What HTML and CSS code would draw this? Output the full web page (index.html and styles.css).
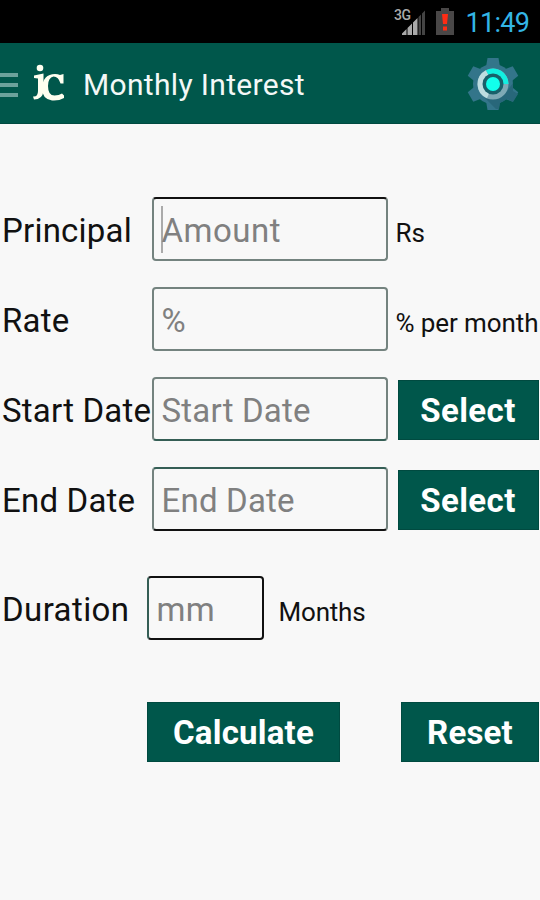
FILE: index.html
```
<!DOCTYPE html>
<html lang="en">
<head>
<meta charset="utf-8">
<title>Monthly Interest</title>
<link rel="stylesheet" href="styles.css">
</head>
<body>
<div class="status">
  <svg class="signal" width="32" height="30" viewBox="0 0 32 30">
    <path fill="#a9a9a9" d="M7 27V25.500L11.500 21V27zM12.500 27V20L17 15.500V27zM18 27V14.500L22.500 10V27z"/>
    <path fill="#444" d="M23.500 27V9L26 6.500V27zM27 27V5.500L30 2.500V27z"/>
  </svg>
  <span class="network">3G</span>
  <svg class="battery" width="18" height="27" viewBox="0 0 18 27">
    <path fill="#494747" d="M5 0h8v3h5v24H0V3h5z"/>
    <path fill="#ff2c14" d="M6 6h6l-1 10H7zM7 18.500h4v4H7z"/>
  </svg>
  <span class="clock">11:49</span>
</div>
<header class="bar">
  <svg class="menu" width="18" height="26" viewBox="0 0 18 26"><path fill="#6ba29b" d="M0 1h18v4H0zM0 11h18v4H0zM0 21h18v4H0z"/></svg>
  <svg class="logo" width="34" height="38" viewBox="0 0 34 38">
    <circle cx="8" cy="4" r="3.300" fill="#fffff0"/>
    <path fill="#fffff0" d="M2 11.500 11.500 9.500V27Q10.500 35.500 2 35.500L1 32.500Q6 33 6 27V14.500L2 14z"/>
    <path fill="#fffff0" d="M31.500 10V19.500H28.500Q26.500 12.500 21.500 12.500Q16 13.500 16 22Q16 31.500 22.500 31.500Q27 31.500 30 29.500L32 31.500V34Q27 37 20 36.500Q10 35 10 24Q11 10 23 10Q26 10 28 11z"/>
  </svg>
  <h1 class="title">Monthly Interest</h1>
  <svg class="gear" width="52" height="54" viewBox="-26 -27 52 54">
    <g fill="#33758a">
      <circle r="20"/>
      <path id="tooth" d="M-7-17-5.500-26H5.500L7-17z"/>
      <use href="#tooth" transform="rotate(60)"/><use href="#tooth" transform="rotate(120)"/>
      <use href="#tooth" transform="rotate(180)"/><use href="#tooth" transform="rotate(240)"/>
      <use href="#tooth" transform="rotate(300)"/>
    </g>
    <path fill="#28677a" d="M11 11 20-1V7L25 10 20 18 14 15 7 19 6 25H3L-8 14z"/>
    <circle r="15.500" fill="#7fa9b5"/>
    <path fill="#bddde0" d="M0 0-6 14.300A15.500 15.500 0 0 1-7-13.800z"/>
    <path fill="#12efe1" d="M0 0-7-13.800A15.500 15.500 0 0 1 15.500 0z"/>
    <circle r="10.500" fill="#18606a"/>
    <circle r="7" fill="#12ffec"/>
  </svg>
</header>
<main class="form">
  <div class="row">
    <span class="label">Principal</span>
    <div class="field f-amount"><i class="caret"></i><span class="hint">Amount</span></div>
    <span class="unit">Rs</span>
  </div>
  <div class="row">
    <span class="label">Rate</span>
    <div class="field"><span class="hint">%</span></div>
    <span class="unit">% per month</span>
  </div>
  <div class="row">
    <span class="label">Start Date</span>
    <div class="field f-start"><span class="hint">Start Date</span></div>
    <div class="btn"><span>Select</span></div>
  </div>
  <div class="row">
    <span class="label">End Date</span>
    <div class="field f-end"><span class="hint">End Date</span></div>
    <div class="btn"><span>Select</span></div>
  </div>
  <div class="row duration">
    <span class="label">Duration</span>
    <div class="field f-months"><span class="hint">mm</span></div>
    <span class="unit u-months">Months</span>
  </div>
  <div class="actions">
    <div class="btn calculate"><span>Calculate</span></div>
    <div class="btn reset"><span>Reset</span></div>
  </div>
</main>
</body>
</html>
```
FILE: styles.css
```
* { box-sizing: border-box; }
body { margin: 0; width: 540px; height: 900px; overflow: hidden; background: #f8f8f8; font-family: Roboto, "Liberation Sans", sans-serif; color: #111; white-space: nowrap; }
svg { display: block; flex: none; }
.status { position: relative; height: 43px; background: #000; display: flex; }
.signal { margin: 8px 0 0 395px; }
.network { position: absolute; left: 394px; top: 7px; font-size: 14px; line-height: 16px; font-weight: 500; letter-spacing: -.5px; color: #aaa; }
.battery { margin: 8px 0 0 9px; }
.clock { margin: 6px 0 0 11.500px; font-size: 27px; line-height: 34px; letter-spacing: -.7px; color: #33b5e5; }
.bar { height: 81px; background: #00574b; border-bottom: 1px solid #004a40; display: flex; }
.menu { margin-top: 29px; }
.logo { margin: 21px 0 0 14px; }
.title { margin: 24px 0 0 17px; width: 384px; font-size: 30px; line-height: 36px; font-weight: 400; letter-spacing: .33px; color: #f3f8f7; }
.gear { margin-top: 14px; }
.form { padding: 73px 0 0; }
.row { height: 64px; margin-bottom: 26px; display: grid; grid-template-columns: 152px 236px 1fr; }
.label, .hint { font-size: 33px; letter-spacing: .2px; }
.label { padding-left: 2px; line-height: 68px; }
.field { height: 64px; padding-left: 7.500px; border: 2px solid #74837f; border-radius: 4px; display: flex; }
.hint { color: #808080; line-height: 64px; }
.f-amount { border-top-color: #111; }
.f-amount .hint { letter-spacing: .5px; }
.f-start { border-bottom-color: #355e55; }
.f-end { border-top-color: #355e55; border-bottom-color: #111; }
.f-months { border-color: #111; border-left-color: #355e55; }
.caret { width: 2px; height: 47px; margin: 7px -1px 0 -1px; background: #aaa; }
.unit { padding-left: 7.500px; font-size: 26px; line-height: 72px; letter-spacing: -.1px; }
.btn { width: 141px; height: 60px; margin: 3px 0 0 9.500px; background: #00574b; border: 1px solid #004a40; color: #fff; font-size: 33px; line-height: 60px; font-weight: 700; letter-spacing: .4px; display: flex; justify-content: center; }
.duration { margin-top: 45px; grid-template-columns: 147px 117px 1fr; }
.duration .label { letter-spacing: .4px; }
.u-months { padding-left: 14.500px; letter-spacing: -.2px; }
.actions { margin: 62px 1px 0 147px; display: flex; justify-content: space-between; }
.actions .btn { margin: 0; letter-spacing: .2px; }
.actions .calculate { width: 193px; }
.actions .reset { width: 138px; }
```
